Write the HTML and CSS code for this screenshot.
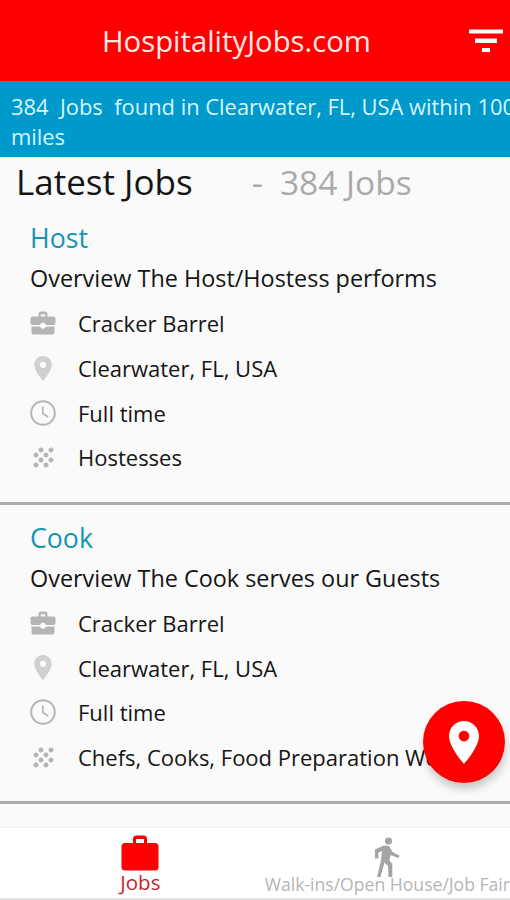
FILE: index.html
```html
<!DOCTYPE html>
<html lang="en">
<head>
    <meta charset="UTF-8">
    <meta name="viewport" content="width=device-width, initial-scale=1.0">
    <title>HospitalityJobs.com</title>
    <link rel="stylesheet" href="styles.css">
</head>
<body>
    <svg class="symbols">
        <symbol id="work" viewBox="0 0 26 24">
            <path d="M8.500 6V3.600Q8.500 0.500 11 0.500H15Q17.500 0.500 17.500 3.600V6H15.200V3.200H10.800V6Z"/>
            <path d="M2.500 5.500H23.500Q25.500 5.500 25.500 7.500V12Q25.500 14 23.500 14H16Q15.500 11.500 13 11.500T10 14H2.500Q0.500 14 0.500 12V7.500Q0.500 5.500 2.500 5.500Z"/>
            <path d="M1.500 15.500H10Q10.500 17.800 13 17.800T16 15.500H24.500V21.300Q24.500 23.500 22.500 23.500H3.500Q1.500 23.500 1.500 21.300Z"/>
        </symbol>
        <symbol id="place" viewBox="5 2 14 20">
            <path fill-rule="evenodd" d="M12 2C8.130 2 5 5.130 5 9c0 5.250 7 13 7 13s7-7.750 7-13c0-3.870-3.130-7-7-7zm0 9.500a2.500 2.500 0 1 1 0-5 2.500 2.500 0 0 1 0 5z"/>
        </symbol>
        <symbol id="clock" viewBox="0 0 26 26">
            <circle cx="13" cy="13" r="11.800" fill="none" stroke="currentColor" stroke-width="2"/>
            <path d="M12.800 6.500V13.500L18.200 17" fill="none" stroke="currentColor" stroke-width="1.700"/>
        </symbol>
        <symbol id="grain" viewBox="2 2 20 20">
            <path d="M10 12c-1.100 0-2 .9-2 2s.9 2 2 2 2-.9 2-2-.9-2-2-2zM6 8c-1.100 0-2 .9-2 2s.9 2 2 2 2-.9 2-2-.9-2-2-2zm0 8c-1.100 0-2 .9-2 2s.9 2 2 2 2-.9 2-2-.9-2-2-2zm12-8c1.100 0 2-.9 2-2s-.9-2-2-2-2 .9-2 2 .9 2 2 2zm-4 8c-1.100 0-2 .9-2 2s.9 2 2 2 2-.9 2-2-.9-2-2-2zm4-4c-1.100 0-2 .9-2 2s.9 2 2 2 2-.9 2-2-.9-2-2-2zm-4-4c-1.100 0-2 .9-2 2s.9 2 2 2 2-.9 2-2-.9-2-2-2zm-4-4c-1.100 0-2 .9-2 2s.9 2 2 2 2-.9 2-2-.9-2-2-2z"/>
        </symbol>
    </svg>

    <header class="topbar">
        <h1>HospitalityJobs.com</h1>
        <svg class="filter" viewBox="0 0 34 24">
            <path d="M0 0.500H34V4.500H0ZM6 9.500H28V14H6ZM13 19H21V23H13Z"/>
        </svg>
    </header>

    <div class="found"><p>384&nbsp; Jobs&nbsp; found in Clearwater, FL, USA within 100</p><p>miles</p></div>

    <main>
        <h2>Latest Jobs <span class="dash">-</span> <span class="count">384 Jobs</span></h2>

        <div class="job">
            <h3>Host</h3>
            <p class="overview">Overview The Host/Hostess performs</p>
            <ul>
                <li><svg class="work"><use href="#work"/></svg>Cracker Barrel</li>
                <li><svg class="place"><use href="#place"/></svg>Clearwater, FL, USA</li>
                <li><svg class="clock"><use href="#clock"/></svg>Full time</li>
                <li><svg class="grain"><use href="#grain"/></svg>Hostesses</li>
            </ul>
        </div>

        <div class="job">
            <h3>Cook</h3>
            <p class="overview">Overview The Cook serves our Guests</p>
            <ul>
                <li><svg class="work"><use href="#work"/></svg>Cracker Barrel</li>
                <li><svg class="place"><use href="#place"/></svg>Clearwater, FL, USA</li>
                <li><svg class="clock"><use href="#clock"/></svg>Full time</li>
                <li><svg class="grain"><use href="#grain"/></svg>Chefs, Cooks, Food Preparation Wo</li>
            </ul>
        </div>
    </main>

    <button class="map-btn" aria-label="Map"><svg><use href="#place"/></svg></button>

    <nav>
        <a class="tab active">
            <svg class="bag" viewBox="0 0 38 36">
                <path fill-rule="evenodd" d="M12 8V4Q12 0.500 15.500 0.500H22.500Q26 0.500 26 4V8H34Q37.500 8 37.500 11.500V32Q37.500 35.500 34 35.500H4Q0.500 35.500 0.500 32V11.500Q0.500 8 4 8ZM15 8H23V4H15Z"/>
            </svg>
            <span>Jobs</span>
        </a>
        <a class="tab walk-tab">
            <svg class="walk" viewBox="0 0 26 40">
                <circle cx="14.500" cy="4" r="3.600"/>
                <path d="M8.500 9Q12 8 15 9L18.500 15L25.500 18.500L24.500 21L16.500 18L15.500 23.500L18.300 27V40H14.500L14 29L10.500 25.500L6.500 40H3L7 23L8 14L4.500 15.500V21.500H1V12.500Z"/>
            </svg>
            <span>Walk-ins/Open House/Job Fair</span>
        </a>
    </nav>
</body>
</html>
```

FILE: styles.css
```css
* {
    margin: 0;
    padding: 0;
    box-sizing: border-box;
    font-weight: normal;
}
body {
    width: 510px;
    height: 900px;
    display: flex;
    flex-direction: column;
    position: relative;
    overflow: hidden;
    background-color: #fafafa;
    color: #151515;
    font-family: "Open Sans", sans-serif;
}
svg {
    fill: currentColor;
}
.symbols {
    display: none;
}
.topbar {
    height: 81px;
    flex-shrink: 0;
    padding: 0 7px 0 102px;
    display: flex;
    align-items: center;
    justify-content: space-between;
    background-color: #ff0000;
    color: #ffe9e6;
}
.topbar h1 {
    font-size: 29.300px;
    line-height: 40px;
}
.filter {
    width: 34px;
    height: 24px;
    color: #fff;
}
.found {
    height: 76px;
    flex-shrink: 0;
    padding: 11px 0 0 11px;
    background-color: #0099cc;
    color: #d5f6ff;
    font-size: 21.900px;
    line-height: 30px;
    white-space: nowrap;
}
main {
    flex: 1;
    overflow: hidden;
}
h2 {
    height: 48px;
    padding-left: 16px;
    display: flex;
    font-size: 35px;
    line-height: 50px;
}
.dash {
    margin-left: 59px;
    color: #aaa;
}
.count {
    margin-left: 17px;
    color: #aaa;
    font-size: 33.500px;
}
.job {
    height: 299.700px;
    padding: 14px 0 0 30px;
    border-bottom: 3px solid #acacac;
    white-space: nowrap;
}
.job h3 {
    color: #1695b0;
    font-size: 26.700px;
    line-height: 38px;
}
.overview {
    margin-bottom: 2px;
    font-size: 23.400px;
    line-height: 42px;
}
.job ul {
    list-style: none;
}
.job li {
    height: 44.700px;
    display: grid;
    grid-template-columns: 26px auto;
    column-gap: 22px;
    align-items: center;
    justify-content: start;
    justify-items: center;
    font-size: 22px;
}
.job li svg {
    color: #b5b5b5;
}
.job .work {
    width: 26px;
    height: 24px;
}
.job .place {
    width: 18px;
    height: 25px;
    color: #d0d0d0;
}
.job .clock {
    width: 26px;
    height: 26px;
}
.job .grain {
    width: 25px;
    height: 25px;
}
.map-btn {
    position: absolute;
    left: 423px;
    top: 701px;
    width: 82px;
    height: 82px;
    display: flex;
    align-items: center;
    justify-content: center;
    border: none;
    border-radius: 50%;
    background-color: #ff0000;
    color: #fff;
    box-shadow: 1px 6px 8px rgba(0, 0, 0, 0.2);
}
.map-btn svg {
    width: 30px;
    height: 43px;
}
nav {
    height: 73px;
    flex-shrink: 0;
    display: flex;
    background-color: #fff;
    border-top: 1px solid #f3f3f3;
    border-bottom: 2px solid #e4e4e4;
}
.tab {
    display: flex;
    flex-direction: column;
    align-items: center;
    white-space: nowrap;
}
.active {
    width: 265px;
    padding: 7px 0 0 16px;
    color: #c81f2b;
    font-size: 20.500px;
    line-height: 22px;
}
.bag {
    width: 38px;
    height: 36px;
    color: #ff0000;
}
.walk-tab {
    padding-top: 9px;
    color: #b5b5b5;
    font-size: 17.600px;
    line-height: 14px;
}
.walk {
    width: 26px;
    height: 40px;
    color: #a5a5a5;
}
```
